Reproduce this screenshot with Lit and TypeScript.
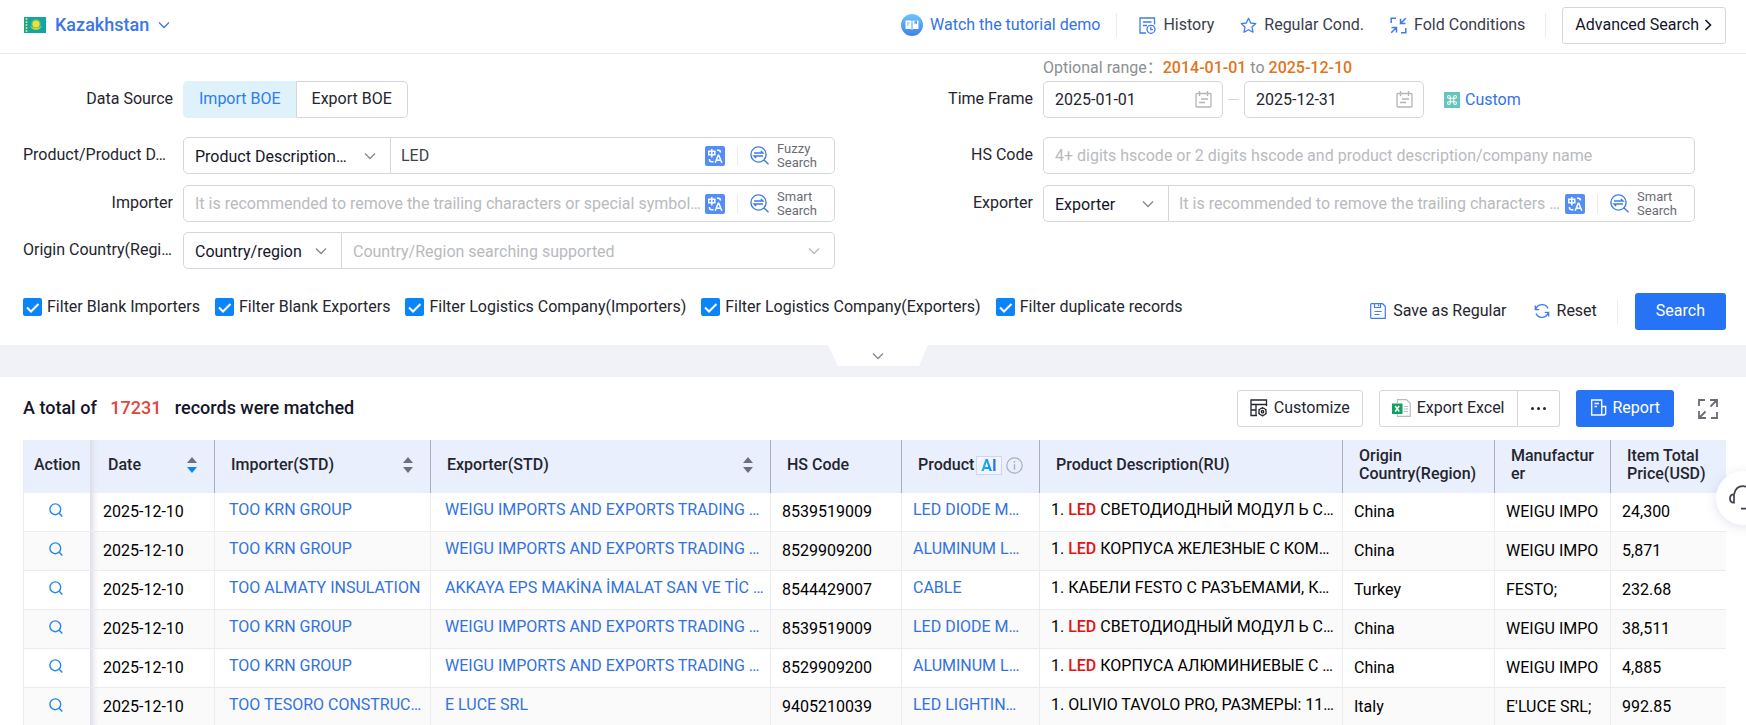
import { LitElement, html, svg, css, nothing, TemplateResult } from "lit";
import { customElement, property } from "lit/decorators.js";

const glyphs: Record<string, { box: string; art: TemplateResult }> = {
  flag: {
    box: "0 0 22 16",
    art: svg`<rect width="22" height="16" fill="#12a5a4"/><g fill="#f3e02f"><circle cx="12" cy="7" r="3.6"/><path d="M6 8.500c1 3 3.500 4.500 6 4.500s5-1.500 6-4.500c-1.500 1.700-3.500 2.500-6 2.500s-4.500-.8-6-2.500z" opacity=".75"/><circle cx="12" cy="7" r="5" opacity=".3"/></g><path d="M2.500 1v14" stroke="#e9dc4a" stroke-width="1.600" stroke-dasharray="2 1"/>`,
  },
  chevron: {
    box: "0 0 12 12",
    art: svg`<path d="M1 3.500 6 8.500 11 3.500" fill="none" stroke="currentColor" stroke-width="1.300"/>`,
  },
  right: {
    box: "0 0 12 12",
    art: svg`<path d="M3.500 1 8.500 6 3.500 11" fill="none" stroke="currentColor" stroke-width="1.600"/>`,
  },
  tutorial: {
    box: "0 0 22 22",
    art: svg`<defs><linearGradient id="tg" x1="0" y1="0" x2="0" y2="1"><stop offset="0" stop-color="#6cc6f8"/><stop offset="1" stop-color="#3f7ff3"/></linearGradient></defs><circle cx="11" cy="11" r="11" fill="url(#tg)"/><path d="M4.500 6.500h5.500l1 .8 1-.8h5.500v8.500h-5.500l-1 .8-1-.8H4.500z" fill="#fff"/><path d="M11 7.500v7.500M6 9h2.500M6 11h1.500" stroke="#5aa8f6" stroke-width="1.100"/><path d="M13.500 6.500h2.500v4l-1.250-1-1.250 1z" fill="#5aa8f6"/>`,
  },
  history: {
    box: "0 0 17 17",
    art: svg`<g fill="none" stroke="currentColor" stroke-width="1.300"><path d="M7 16H1V1h14.500v6.500M4 5h8.500M4 8.500h4"/><circle cx="12" cy="12.300" r="4"/><path d="M11.800 10v2.600h2"/></g>`,
  },
  star: {
    box: "0 0 17 17",
    art: svg`<path d="M8.500 1.300 10.700 6l5.100.6-3.800 3.500 1 5.100-4.500-2.500L4 15.200l1-5.100L1.200 6.600 6.300 6z" fill="none" stroke="currentColor" stroke-width="1.300" stroke-linejoin="round"/>`,
  },
  fold: {
    box: "0 0 17 17",
    art: svg`<g fill="none" stroke="currentColor" stroke-width="1.500"><path d="M6 1.200H1.200V6M11 15.800h4.800V11M15.800 1.200 11 6M10.500 1.800V6.500H15.500M1.200 15.800 6 11M1.500 10.500H6.500v5"/></g>`,
  },
  calendar: {
    box: "0 0 17 17",
    art: svg`<g fill="none" stroke="currentColor" stroke-width="1.300"><rect x="1" y="2.500" width="15" height="13.500" rx="1"/><path d="M4.500 0v5M12.500 0v5M6 8h7M4 11.500h6"/></g>`,
  },
  command: {
    box: "0 0 16 16",
    art: svg`<rect width="16" height="16" fill="#63c5bb"/><path d="M6.300 6.300h3.400v3.400H6.300zM6.300 6.300H4.900a1.400 1.400 0 1 1 1.400-1.400zM9.700 6.300V4.900a1.400 1.400 0 1 1 1.400 1.400zM9.700 9.700h1.400a1.400 1.400 0 1 1-1.400 1.400zM6.300 9.700v1.400a1.400 1.400 0 1 1-1.400-1.400z" fill="none" stroke="#fff" stroke-width="1.100"/>`,
  },
  translate: {
    box: "0 0 20 20",
    art: svg`<rect width="20" height="20" rx="2" fill="#528ef5"/><g fill="none" stroke="#fff" stroke-width="1.500"><path d="M3.800 5.200h6v3.600h-6zM6.800 3v8.500"/><path d="M12 4.200h1.500c1.500 0 2 .8 2 2.300M4.500 13v.8c0 1.400.8 2 2.200 2H8.500"/><path d="M10.200 16.800 13.200 9.300h.6l3 7.500M11.300 14.300h4.500"/></g>`,
  },
  smart: {
    box: "0 0 19 19",
    art: svg`<g fill="none" stroke="currentColor" stroke-width="1.400"><circle cx="8.500" cy="8.500" r="7.600"/><path d="M14 14 18.500 18.300M4 7h9L10.800 5M13 10H4l2.200 2"/></g>`,
  },
  tick: {
    box: "0 0 19 18",
    art: svg`<path d="M4 9.500 8 13.500 15.500 6" fill="none" stroke="#fff" stroke-width="2"/>`,
  },
  save: {
    box: "0 0 16 16",
    art: svg`<g fill="none" stroke="currentColor" stroke-width="1.200"><path d="M1.500.7h11l2.800 2.600v12H1.500a.8.8 0 0 1-.8-.8V1.500a.8.8 0 0 1 .8-.8zM4.500.8v3.700h6V.8M8.500 1.500v1.800M4.500 8.500h7M4.500 11.500h5"/></g>`,
  },
  reset: {
    box: "0 0 16 16",
    art: svg`<g fill="none" stroke="currentColor" stroke-width="1.300"><path d="M1.800 6.500A6.500 6.500 0 0 1 14 5.500M14.200 9.500A6.500 6.500 0 0 1 2 10.500M1.300 2.500v4.200h4M14.700 13.500V9.300h-4"/></g>`,
  },
  columns: {
    box: "0 0 18 18",
    art: svg`<g fill="none" stroke="currentColor" stroke-width="1.300"><path d="M7 16.500H1V1h15.500v6M1 5.500h15.500M6 5.500v11M1 11h5"/><circle cx="12.500" cy="12.700" r="3.600"/><circle cx="12.500" cy="12.700" r="1.200"/><path d="M12.500 8v1.200M12.500 16.200v1.300M8.500 10.400l1 .6M15.500 14.400l1 .6M8.500 15l1-.6M15.500 11l1-.6"/></g>`,
  },
  excel: {
    box: "0 0 19 18",
    art: svg`<path d="M5.500 4V.7h9l3.700 3.500v13.100H5.500V15" fill="#fff" stroke="#b9bcc2" stroke-width="1.200"/><path d="M12 7.500h4M12 10h4M12 12.500h4" stroke="#b9bcc2" stroke-width="1.200"/><rect y="4.500" width="10.500" height="10.500" fill="#12a160"/><path d="M3.200 7l4 5.500M7.200 7l-4 5.500" stroke="#fff" stroke-width="1.500"/>`,
  },
  report: {
    box: "0 0 17 17",
    art: svg`<g fill="none" stroke="currentColor" stroke-width="1.300"><path d="M14 16H1.700V1h10v15M11.700 7.500h4V14c0 1.300-.7 2-2 2M4.500 4.500h4.500M4.500 7.500h2.500"/></g>`,
  },
  expand: {
    box: "0 0 20 20",
    art: svg`<g fill="none" stroke="currentColor" stroke-width="1.800"><path d="M1 7V1h6M19 13v6h-6M12 1h7v7M19 1l-6.500 6.500M8 19H1v-7M1 19l6.500-6.500"/></g>`,
  },
  search: {
    box: "0 0 14 14",
    art: svg`<g fill="none" stroke="currentColor" stroke-width="1.400"><circle cx="6.300" cy="6.300" r="5.400"/><path d="M10.200 10.200 13.300 13.500"/></g>`,
  },
  info: {
    box: "0 0 17 17",
    art: svg`<g fill="none" stroke="currentColor" stroke-width="1.200"><circle cx="8.500" cy="8.500" r="7.700"/><path d="M8.500 7.300v5.500M8.500 4v1.700" stroke-width="1.400"/></g>`,
  },
  headset: {
    box: "0 0 28 26",
    art: svg`<g fill="none" stroke="currentColor" stroke-width="1.700"><path d="M5 9.500C6 4 9.500 1.200 14 1.200S22 4 23 9.500M5 9.300v8.400c-2.400 0-4-1.700-4-4.200s1.600-4.200 4-4.200zM23 9.300v8.400c2.400 0 4-1.700 4-4.200s-1.600-4.200-4-4.200zM23 17.500c-1 4-3 5.800-6.500 6.200H12"/></g>`,
  },
};

const icon = (name: string, cls = "") => {
  const g = glyphs[name];
  const [, , w, h] = g.box.split(" ");
  return html`<svg class="icon ${cls}" viewBox=${g.box} width=${w} height=${h} aria-hidden="true">${g.art}</svg>`;
};

const base = css`
  * {
    box-sizing: border-box;
  }
  .icon {
    display: block;
    flex: none;
  }
  button,
  input,
  select {
    font: inherit;
    color: inherit;
    margin: 0;
    border-radius: 0;
  }
  button {
    display: inline-flex;
    align-items: center;
    border: 0;
    padding: 0;
    background: none;
    white-space: nowrap;
    cursor: pointer;
  }
  a {
    color: inherit;
    text-decoration: none;
  }
  .rule {
    width: 1px;
    height: 24px;
    background: #ececef;
    flex: none;
  }
  .blue {
    color: #3d7cf0;
  }
  .boxed {
    height: 37px;
    border: 1px solid #d5d6d9;
    border-radius: 3px;
    background: #fff;
  }
  .primary {
    height: 37px;
    border-radius: 3px;
    background: #2673f5;
    color: #fff;
  }
`;

@customElement("page-header")
class PageHeader extends LitElement {
  static styles = [
    base,
    css`
      :host {
        display: flex;
        align-items: center;
        justify-content: space-between;
        height: 54px;
        padding: 0 20px 3px 24px;
        border-bottom: 1px solid #e8e9eb;
      }
      .country {
        gap: 9px;
        padding-bottom: 1px;
        font-size: 18px;
        font-weight: 500;
        color: #3a76ea;
      }
      .tools,
      .links {
        display: flex;
        align-items: center;
      }
      .tools {
        gap: 16px;
      }
      .links {
        gap: 26px;
        padding: 0 4px 0 6px;
        color: #3a3d4d;
      }
      .link {
        display: flex;
        align-items: center;
        gap: 7px;
      }
      .demo {
        color: #3272ea;
      }
      .advanced {
        gap: 3px;
        padding: 0 11px 0 12px;
        color: #14152b;
      }
    `,
  ];
  render() {
    return html`
      <button class="country">${icon("flag")}<span>Kazakhstan</span>${icon("chevron")}</button>
      <div class="tools">
        <a class="link demo" href="#demo">${icon("tutorial")}Watch the tutorial demo</a>
        <span class="rule"></span>
        <nav class="links">
          <a class="link" href="#history">${icon("history", "blue")}History</a>
          <a class="link" href="#regular">${icon("star", "blue")}Regular Cond.</a>
          <a class="link" href="#fold">${icon("fold", "blue")}Fold Conditions</a>
        </nav>
        <span class="rule"></span>
        <button class="advanced boxed">Advanced Search ${icon("right")}</button>
      </div>
    `;
  }
}

@customElement("search-form")
class SearchForm extends LitElement {
  static styles = [
    base,
    css`
      :host {
        display: block;
        padding: 0 20px 15px 23px;
      }
      .columns {
        display: grid;
        grid-template-columns: 1fr 1fr;
        gap: 48px;
        padding-right: 31px;
      }
      .column {
        display: grid;
        grid-template-rows: 27px 56px 48px 47px 37px;
        align-items: start;
      }
      .range {
        margin-left: 160px;
        line-height: 27px;
        color: #8d8f94;
      }
      .range b {
        font-weight: 500;
        color: #e0751a;
      }
      .row {
        display: grid;
        grid-template-columns: 150px minmax(0, 1fr);
        gap: 10px;
        line-height: 37px;
      }
      .name {
        line-height: 35px;
        text-align: right;
        white-space: nowrap;
        color: #24252e;
      }
      .long {
        text-align: left;
      }
      .field {
        display: flex;
        min-width: 0;
      }
      .field > * + .boxed {
        border-left: 0;
        border-top-left-radius: 0;
        border-bottom-left-radius: 0;
      }
      .boxed {
        border-radius: 5px;
      }
      .open {
        border-top-right-radius: 0;
        border-bottom-right-radius: 0;
      }
      .grow {
        flex: 1;
        min-width: 0;
      }
      .toggle {
        padding: 0 15px 2px;
      }
      .toggle.on {
        background: #dff1fb;
        border-color: #dff1fb;
        border-right-color: #d5d6d9;
        color: #2d7cf0;
      }
      .pick {
        display: grid;
        align-items: center;
        color: #14152b;
      }
      .pick > * {
        grid-area: 1 / 1;
      }
      .pick select {
        appearance: none;
        width: 100%;
        height: 35px;
        border: 0;
        outline: 0;
        background: none;
        padding: 0 34px 3px 11px;
      }
      .pick .icon {
        justify-self: end;
        margin-right: 14px;
        color: #85878e;
        pointer-events: none;
      }
      .pick.empty,
      .pick.empty .icon {
        color: #b9babe;
      }
      .kind {
        width: 208px;
      }
      .region {
        width: 159px;
      }
      .party {
        width: 126px;
      }
      .entry {
        display: flex;
        align-items: center;
        padding: 0 17px 0 0;
      }
      .entry input,
      .plain,
      .date input {
        flex: 1;
        min-width: 0;
        height: 35px;
        border: 0;
        outline: 0;
        background: none;
        padding: 0 0 0 11px;
        text-overflow: ellipsis;
        color: #40414f;
      }
      .open + .entry input {
        padding-left: 10px;
      }
      input::placeholder {
        color: #b9babe;
        opacity: 1;
      }
      .plain {
        height: 37px;
        padding: 0 11px;
        border: 1px solid #d5d6d9;
      }
      .aids {
        display: flex;
        align-items: center;
        gap: 12px;
      }
      .aids .rule {
        height: 20px;
      }
      .mode {
        gap: 8px;
        font-size: 13px;
        line-height: 14px;
        text-align: left;
        color: #6a6c76;
      }
      .date {
        display: flex;
        align-items: center;
        width: 180px;
        padding-right: 10px;
      }
      .date input {
        color: #24252e;
      }
      .date .icon {
        color: #b4b5b9;
      }
      .span {
        display: flex;
        align-items: center;
        gap: 5px;
      }
      .dash {
        width: 11px;
        height: 1px;
        background: #d5d6d9;
      }
      .custom {
        display: flex;
        align-items: center;
        gap: 5px;
        margin-left: 15px;
        color: #3272ea;
      }
      .foot {
        display: flex;
        justify-content: space-between;
        padding-top: 24px;
      }
      .checks {
        display: flex;
        gap: 15px;
      }
      .check {
        display: flex;
        align-items: center;
        gap: 5px;
        height: 28px;
        color: #24252e;
      }
      .tick {
        display: grid;
      }
      .tick > * {
        grid-area: 1 / 1;
      }
      .tick input {
        appearance: none;
        width: 19px;
        height: 18px;
        border-radius: 2px;
        background: #0a84fb;
      }
      .tick .icon {
        pointer-events: none;
      }
      .acts {
        display: flex;
        align-items: center;
        gap: 27px;
        color: #24252e;
      }
      .act {
        gap: 7px;
        padding-bottom: 2px;
      }
      .end {
        display: flex;
        align-items: center;
        gap: 17px;
        margin-left: -7px;
      }
      .go {
        padding: 0 21px 2px;
      }
    `,
  ];

  private aids(mode: string) {
    return html`<div class="aids">
      <button aria-label="Translate">${icon("translate")}</button>
      <span class="rule"></span>
      <button class="mode">${icon("smart", "blue")}<span>${mode}<br />Search</span></button>
    </div>`;
  }

  private pick(id: string, cls: string, text: string) {
    return html`<div class="pick boxed ${cls}">
      <select id=${id} aria-label=${text}><option>${text}</option></select>${icon("chevron")}
    </div>`;
  }

  private date(id: string, value: string) {
    return html`<div class="date boxed"><input id=${id} .value=${value} aria-label="Date" />${icon("calendar")}</div>`;
  }

  render() {
    const filters = [
      "Filter Blank Importers",
      "Filter Blank Exporters",
      "Filter Logistics Company(Importers)",
      "Filter Logistics Company(Exporters)",
      "Filter duplicate records",
    ];
    return html`
      <div class="columns">
        <div class="column">
          <span></span>
          <div class="row">
            <span class="name">Data Source</span>
            <div class="field">
              <button class="toggle boxed open on">Import BOE</button>
              <button class="toggle boxed">Export BOE</button>
            </div>
          </div>
          <div class="row">
            <label class="name long" for="product">Product/Product D…</label>
            <div class="field">
              ${this.pick("kind", "kind open", "Product Description…")}
              <div class="entry boxed grow"><input id="product" .value=${"LED"} />${this.aids("Fuzzy")}</div>
            </div>
          </div>
          <div class="row">
            <label class="name" for="importer">Importer</label>
            <div class="field">
              <div class="entry boxed grow">
                <input id="importer" placeholder="It is recommended to remove the trailing characters or special symbol…" />
                ${this.aids("Smart")}
              </div>
            </div>
          </div>
          <div class="row">
            <label class="name long" for="origin">Origin Country(Regi…</label>
            <div class="field">
              ${this.pick("region", "region open", "Country/region")}
              ${this.pick("origin", "grow empty", "Country/Region searching supported")}
            </div>
          </div>
        </div>
        <div class="column">
          <div class="range">Optional range：<b>2014-01-01</b> to <b>2025-12-10</b></div>
          <div class="row">
            <label class="name" for="from">Time Frame</label>
            <div class="span">
              ${this.date("from", "2025-01-01")}<span class="dash"></span>${this.date("to", "2025-12-31")}
              <a class="custom" href="#custom">${icon("command")}Custom</a>
            </div>
          </div>
          <div class="row">
            <label class="name" for="hs">HS Code</label>
            <div class="field">
              <input
                id="hs"
                class="plain boxed grow"
                placeholder="4+ digits hscode or 2 digits hscode and product description/company name"
              />
            </div>
          </div>
          <div class="row">
            <label class="name" for="exporter">Exporter</label>
            <div class="field">
              ${this.pick("party", "party open", "Exporter")}
              <div class="entry boxed grow">
                <input id="exporter" placeholder="It is recommended to remove the trailing characters …" />
                ${this.aids("Smart")}
              </div>
            </div>
          </div>
        </div>
      </div>
      <div class="foot">
        <div class="checks">
          ${filters.map(
            (f) => html`<label class="check"
              ><span class="tick"><input type="checkbox" checked />${icon("tick")}</span>${f}</label
            >`,
          )}
        </div>
        <div class="acts">
          <button class="act">${icon("save", "blue")}Save as Regular</button>
          <button class="act">${icon("reset", "blue")}Reset</button>
          <div class="end"><span class="rule"></span><button class="go primary">Search</button></div>
        </div>
      </div>
    `;
  }
}

type Row = { importer: string; exporter: string; hs: string; product: string; hit: boolean; text: string; origin: string; maker: string; price: string };
const row = (importer: string, exporter: string, hs: string, product: string, hit: boolean, text: string, origin: string, maker: string, price: string): Row => ({
  importer, exporter, hs, product, hit, text, origin, maker, price,
});
const WEIGU = "WEIGU IMPORTS AND EXPORTS TRADING …";
const rows: Row[] = [
  row("TOO KRN GROUP", WEIGU, "8539519009", "LED DIODE M…", true, "СВЕТОДИОДНЫЙ МОДУЛ Ь С…", "China", "WEIGU IMPO", "24,300"),
  row("TOO KRN GROUP", WEIGU, "8529909200", "ALUMINUM L…", true, "КОРПУСА ЖЕЛЕЗНЫЕ С КОМ…", "China", "WEIGU IMPO", "5,871"),
  row("TOO ALMATY INSULATION", "AKKAYA EPS MAKİNA İMALAT SAN VE TİC …", "8544429007", "CABLE", false, "КАБЕЛИ FESTO С РАЗЪЕМАМИ, К…", "Turkey", "FESTO;", "232.68"),
  row("TOO KRN GROUP", WEIGU, "8539519009", "LED DIODE M…", true, "СВЕТОДИОДНЫЙ МОДУЛ Ь С…", "China", "WEIGU IMPO", "38,511"),
  row("TOO KRN GROUP", WEIGU, "8529909200", "ALUMINUM L…", true, "КОРПУСА АЛЮМИНИЕВЫЕ С …", "China", "WEIGU IMPO", "4,885"),
  row("TOO TESORO CONSTRUC…", "E LUCE SRL", "9405210039", "LED LIGHTIN…", false, "OLIVIO TAVOLO PRO, РАЗМЕРЫ: 11…", "Italy", "E'LUCE SRL;", "992.85"),
];

@customElement("result-table")
class ResultTable extends LitElement {
  @property({ attribute: false }) rows: Row[] = [];
  static styles = [
    base,
    css`
      :host {
        display: block;
        overflow: hidden;
      }
      table {
        width: 100%;
        table-layout: fixed;
        border-collapse: separate;
        border-spacing: 0;
        border-left: 1px solid #ebecf0;
      }
      .c-action { width: 66px; }
      .c-date { width: 125px; }
      .c-importer { width: 216px; }
      .c-exporter { width: 340px; }
      .c-hs { width: 131px; }
      .c-product { width: 138px; }
      .c-origin { width: 152px; }
      .c-maker { width: 116px; }
      .c-price { width: 115px; }
      th {
        height: 53px;
        padding: 0 15px 3px 16px;
        border-right: 1px solid #a9adbd;
        background: #e9effd;
        font-weight: 500;
        line-height: 18px;
        text-align: left;
        color: #24252e;
        overflow-wrap: anywhere;
      }
      td {
        height: 39px;
        padding: 0 6px 4px 11px;
        border-right: 1px solid #ebecf0;
        border-bottom: 1px solid #ebecf0;
        line-height: 34px;
        white-space: nowrap;
        color: #000;
      }
      .low {
        padding-top: 2px;
        padding-bottom: 2px;
      }
      tbody tr:nth-child(even) td {
        background-color: #fafafa;
      }
      th:last-child,
      td:last-child,
      th.act,
      td.act {
        border-right: 0;
      }
      th.act {
        padding-left: 10px;
        padding-right: 0;
      }
      td.act {
        padding-left: 25px;
        color: #2387ee;
      }
      td.act button {
        height: 34px;
        vertical-align: top;
      }
      th.shade,
      td.shade {
        background-image: linear-gradient(90deg, #dcdde9, rgba(233, 234, 243, 0.4) 60%, transparent);
        background-size: 9px 100%;
        background-repeat: no-repeat;
      }
      th.shade {
        padding-left: 18px;
      }
      td.shade {
        padding-left: 13px;
      }
      .wide {
        padding-left: 14px;
      }
      td a {
        color: #3272e0;
      }
      mark {
        background: none;
        font-weight: 500;
        color: #e01414;
      }
      .head {
        display: flex;
        align-items: center;
        justify-content: space-between;
      }
      .head.tight {
        justify-content: flex-start;
        gap: 2px;
      }
      .sort {
        display: grid;
        gap: 4px;
        margin-right: 2px;
        color: #6e7079;
      }
      .down {
        color: #0a84fb;
      }
      .ai {
        margin-right: 2px;
        padding: 0 4px;
        border: 1px solid #cfd5f3;
        background: #f2f5ff;
        line-height: 17px;
        font-weight: 700;
      }
      .ai span {
        background: linear-gradient(90deg, #15bde8, #1f6cf5);
        background-clip: text;
        color: transparent;
      }
      .info {
        color: #a9adbd;
      }
    `,
  ];

  private sort(text: string, down = false) {
    return html`<div class="head">
      ${text}
      <button class="sort" aria-label="Sort by ${text}">
        <svg class="icon" width="10" height="6" viewBox="0 0 10 6"><path d="M0 6 5 0 10 6z" fill="currentColor" /></svg>
        <svg class="icon ${down ? "down" : ""}" width="10" height="6" viewBox="0 0 10 6"><path d="M0 0 5 6 10 0z" fill="currentColor" /></svg>
      </button>
    </div>`;
  }

  render() {
    return html`<table>
      <colgroup>
        <col class="c-action" /><col class="c-date" /><col class="c-importer" /><col class="c-exporter" /><col class="c-hs" />
        <col class="c-product" /><col /><col class="c-origin" /><col class="c-maker" /><col class="c-price" />
      </colgroup>
      <thead>
        <tr>
          <th class="act">Action</th>
          <th class="shade">${this.sort("Date", true)}</th>
          <th>${this.sort("Importer(STD)")}</th>
          <th>${this.sort("Exporter(STD)")}</th>
          <th>HS Code</th>
          <th><div class="head tight">Product<span class="ai"><span>AI</span></span>${icon("info", "info")}</div></th>
          <th>Product Description(RU)</th>
          <th>Origin Country(Region)</th>
          <th>Manufacturer</th>
          <th>Item Total Price(USD)</th>
        </tr>
      </thead>
      <tbody>
        ${this.rows.map(
          (r) => html`<tr>
            <td class="act"><button aria-label="View record">${icon("search")}</button></td>
            <td class="shade low">2025-12-10</td>
            <td class="wide"><a href="#importer">${r.importer}</a></td>
            <td class="wide"><a href="#exporter">${r.exporter}</a></td>
            <td class="low">${r.hs}</td>
            <td><a href="#product">${r.product}</a></td>
            <td>1. ${r.hit ? html`<mark>LED</mark> ` : nothing}${r.text}</td>
            <td class="low">${r.origin}</td>
            <td class="low">${r.maker}</td>
            <td class="low">${r.price}</td>
          </tr>`,
        )}
      </tbody>
    </table>`;
  }
}

@customElement("app-root")
class AppRoot extends LitElement {
  static styles = [
    base,
    css`
      :host {
        position: relative;
        display: flex;
        flex-direction: column;
        height: 100vh;
        overflow: hidden;
        background: #fff;
        font: 16px/20px Roboto, "Noto Sans CJK SC", sans-serif;
        color: #24252e;
      }
      page-header,
      search-form,
      .band,
      .bar {
        flex: none;
      }
      .band {
        display: flex;
        justify-content: center;
        height: 32px;
        padding-left: 10px;
        background: #f1f2f7;
      }
      .tab {
        justify-content: center;
        width: 100px;
        height: 21px;
        background: #fff;
        clip-path: polygon(0 0, 100% 0, 91% 100%, 10% 100%);
        color: #85878e;
      }
      .bar {
        display: flex;
        align-items: center;
        justify-content: space-between;
        padding: 13px 28px 13px 23px;
      }
      .total {
        margin: 0;
        padding-bottom: 2px;
        font-size: 18px;
        font-weight: 500;
        color: #14152b;
      }
      .total strong {
        margin: 0 9px;
        font-weight: 500;
        color: #e2463d;
      }
      .tools {
        display: flex;
        align-items: center;
        gap: 16px;
      }
      .tool {
        gap: 6px;
        padding: 0 12px 2px;
      }
      .tool.primary {
        padding: 0 14px 2px;
      }
      .group {
        display: flex;
      }
      .left {
        border-radius: 3px 0 0 3px;
      }
      .more {
        width: 42px;
        border-left: 0;
        border-radius: 0 3px 3px 0;
        justify-content: center;
        gap: 3px;
      }
      .dot {
        width: 3px;
        height: 3px;
        border-radius: 50%;
        background: #24252e;
      }
      .full {
        margin-left: 8px;
        color: #6a6c76;
      }
      .results {
        flex: 1;
        min-height: 0;
        margin: 0 20px 0 23px;
      }
      .help {
        position: absolute;
        top: 471px;
        right: -24px;
        width: 54px;
        height: 54px;
        justify-content: center;
        border-radius: 50%;
        background: #fff;
        box-shadow: 0 2px 12px rgba(80, 90, 140, 0.16);
        color: #40414f;
      }
    `,
  ];
  render() {
    return html`
      <page-header></page-header>
      <search-form></search-form>
      <div class="band"><button class="tab" aria-label="Collapse">${icon("chevron")}</button></div>
      <div class="bar">
        <p class="total">A total of <strong>17231</strong> records were matched</p>
        <div class="tools">
          <button class="tool boxed">${icon("columns")}Customize</button>
          <div class="group">
            <button class="tool boxed left">${icon("excel")}Export Excel</button>
            <button class="boxed more" aria-label="More">
              <span class="dot"></span><span class="dot"></span><span class="dot"></span>
            </button>
          </div>
          <button class="tool primary">${icon("report")}Report</button>
          <button class="full" aria-label="Full screen">${icon("expand")}</button>
        </div>
      </div>
      <result-table class="results" .rows=${rows}></result-table>
      <button class="help" aria-label="Support">${icon("headset")}</button>
    `;
  }
}
